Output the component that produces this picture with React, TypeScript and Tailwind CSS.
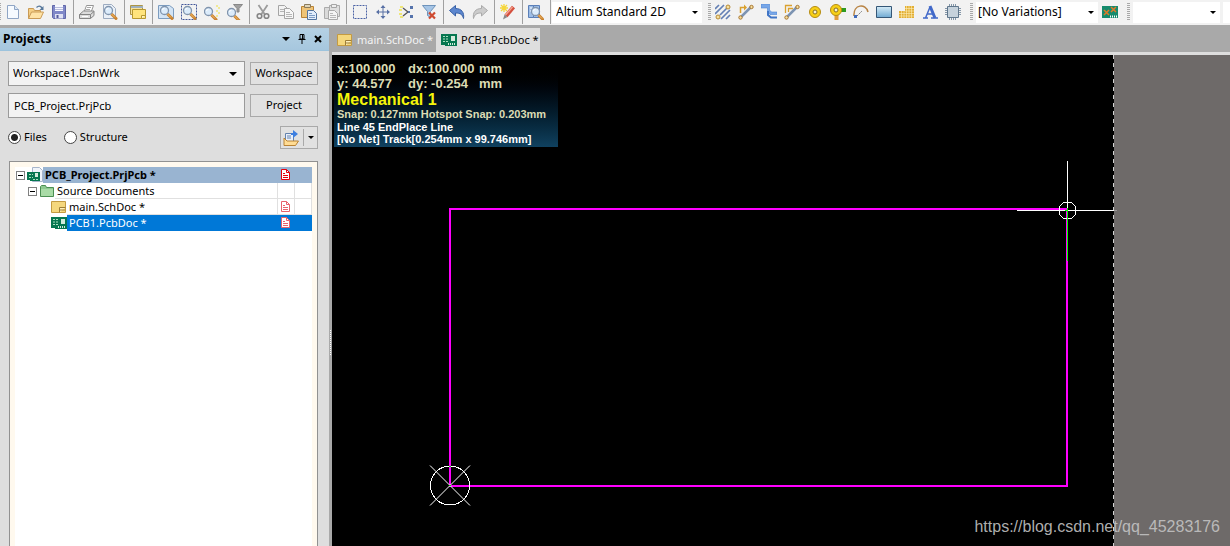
import {useState} from 'react'
import type {ReactNode} from 'react'

const lens = (
    <g>
        <path d="M10 10.5l4 4" stroke="#c9822f" strokeWidth="3" strokeLinecap="round"/>
        <path d="M9.5 10l3.5 3.5" stroke="#f3bd6c" strokeWidth="1"/>
        <circle cx="6.5" cy="6.5" r="4" fill="#dcecfb" stroke="#8094ad" strokeWidth="1.3"/>
        <path d="M4.5 6a2.2 2.2 0 0 1 2-1.8" stroke="#fff" fill="none"/>
    </g>
)

const page = 'M2.5 1.5h7l4 4v9h-11z'

const icons: Record<string, ReactNode> = {
    new: <><path d={page} fill="#f6faff" stroke="#8fa5c5"/><path d="M9.5 1.5v4h4" fill="#dbe7f5" stroke="#8fa5c5"/></>,
    open: <>
        <path d="M.5 14.5v-10h5l1 2h6v3" fill="#f5cf85" stroke="#c99a55"/>
        <path d="M.5 14.5l3-6.5h12l-3 6.5z" fill="#ffe3a6" stroke="#c99a55"/>
        <path d="M8.5 3.5q3-3 5.5.5" fill="none" stroke="#56779b" strokeWidth="1.3"/>
        <path d="M15.5 2v4h-4z" fill="#56779b"/>
    </>,
    save: <>
        <path d="M1.5 1.5h13v13h-12l-1-1z" fill="#8088c8" stroke="#6167a9"/>
        <path d="M4 1h8v6H4z" fill="#f7f8ff"/>
        <path d="M4 3.5h8M4 5.500h8" stroke="#b9bddc"/>
        <path d="M4 10h8v4.500H4z" fill="#dfe1f3"/>
        <path d="M5.500 11h2v3h-2z" fill="#545a9c"/>
    </>,
    print: <>
        <path d="M5.500 7l2-5.500h7L12.500 7" fill="#fff" stroke="#959595"/>
        <path d="M8 3.500h4M7 5.500h4" stroke="#aaa"/>
        <path d="M.5 10.500l4-3.500h10.500v4.500l-3.500 3H.5z" fill="#dcdcdc" stroke="#858585"/>
        <path d="M.5 10.500h11l3.500-3M11.500 10.500v4" fill="none" stroke="#858585"/>
        <path d="M3 12.500h6" stroke="#fff"/>
    </>,
    preview: <><path d="M1.500.5h8l4 4v10h-12z" fill="#eaf0f7" stroke="#9cabc0"/>{lens}</>,
    windows: <>
        <path d="M.5 1.500h12v9H.5z" fill="#f7e29c" stroke="#ac9545"/>
        <path d="M1 3h12" stroke="#9fb0bd" strokeWidth="2"/>
        <path d="M2.500 5.500h13v9h-13z" fill="#ffe47c" stroke="#b79831"/>
        <path d="M11.500 14.500v-3h4" fill="#fff5c6" stroke="#b79831"/>
    </>,
    fit: <><path d="M.5 1.500h11l4 3v10H.5z" fill="#d3e4f5" stroke="#7c9cbf"/>{lens}</>,
    area: <><path d="M.5.5h15v15H.5z" fill="none" stroke="#44589b" strokeDasharray="2 1"/>{lens}</>,
    selected: <>
        <g transform="translate(-2 1)">{lens}</g>
        <path d="M12 2h2M14 4h2M12 7h2M14 9h2M12 12h2" stroke="#efe678" strokeWidth="1.500"/>
    </>,
    filtered: <>
        <g transform="translate(-2 2)">{lens}</g>
        <path d="M6.500.5h9l-3.500 4V8h-2V4.500z" fill="#a0a0a0" stroke="#888"/>
    </>,
    cut: <>
        <path d="M3.500 1l6 9M12.500 1l-6 9" stroke="#9b9b9b" strokeWidth="1.800"/>
        <circle cx="4.500" cy="12" r="2.300" fill="none" stroke="#858585" strokeWidth="1.600"/>
        <circle cx="11.500" cy="12" r="2.300" fill="none" stroke="#858585" strokeWidth="1.600"/>
    </>,
    copy: <>
        <path d="M.5 1.500h6l3 3v7h-9z" fill="#f3f3f3" stroke="#a5a5a5"/>
        <path d="M6.500 4.500h5l4 4v6h-9z" fill="#f7f7f7" stroke="#a5a5a5"/>
        <path d="M2 5.500h4M2 7.500h4M8 8.500h4M8 10.500h6M8 12.500h6" stroke="#b5b5b5"/>
    </>,
    paste: <>
        <path d="M.5 2.500h12v11H.5z" fill="#efc477" stroke="#b98335"/>
        <path d="M3.500.5h6v3h-6z" fill="#e0d5b8" stroke="#8b7b5b"/>
        <path d="M6.500 6.500h6l3 3v6h-9z" fill="#e2edfb" stroke="#52749f"/>
        <path d="M8 9.500h3M8 11.500h6M8 13.500h6" stroke="#7d9cc4"/>
    </>,
    pasteSpecial: <>
        <path d="M.5 3.500h11v11H.5z" fill="#dadada" stroke="#ababab"/>
        <path d="M5.500 1.500h10v11h-10z" fill="#dfdfdf" stroke="#ababab"/>
        <path d="M7.500.5h5v3h-5z" fill="#eee" stroke="#a5a5a5"/>
        <path d="M4.500 6.500h6l3 3v6h-9z" fill="#f4f4f4" stroke="#a9a9a9"/>
        <path d="M6 9.500h3M6 11.500h6M6 13.500h6" stroke="#b8b8b8"/>
    </>,
    marquee: <path d="M1.500 1.500h13v13h-13z" fill="none" stroke="#4b62a5" strokeDasharray="2 1"/>,
    move: <>
        <path d="M8 2v12M2 8h12" stroke="#5870a4"/>
        <path d="M8 1L5.500 4h5zM8 15l-2.500-3h5zM1 8l3-2.500v5zM15 8l-3-2.500v5z" fill="#5870a4"/>
    </>,
    deselect: <>
        <path d="M2 3h3M1 6h3M1 10h3M2 13h3" stroke="#efe678" strokeWidth="2"/>
        <path d="M5 4l5 4-5 4" fill="none" stroke="#555" strokeWidth="1.300"/>
        <path d="M12 2h3v3h-3zM12 11h3v3h-3zM10 7h2v2h-2z" fill="#5573ac"/>
    </>,
    clear: <>
        <path d="M1.500 1.500h13l-5 6v6l-3-2v-4z" fill="#a6c5e6" stroke="#6e93bb"/>
        <path d="M8 8.500l6 6M14 8.500l-6 6" stroke="#cf4a30" strokeWidth="2.200"/>
    </>,
    undo: <path d="M.5 6.500l6-5v3c6 0 9 4 8 10-1-4-3-5.500-8-5.500v3z" fill="#5d87cf" stroke="#3861a6"/>,
    redo: <path d="M15.500 6.500l-6-5v3c-6 0-9 4-8 10 1-4 3-5.500 8-5.500v3z" fill="#ccc" stroke="#aaa"/>,
    wand: <>
        <path d="M6 12L13.500 3" stroke="#d4503f" strokeWidth="4"/>
        <path d="M5.500 11l7-8" stroke="#f5a590" strokeWidth="1.300"/>
        <path d="M3 15.500l1.500-5 3 2.500z" fill="#8a8a8a"/>
        <path d="M4 0v8M0 4h8M1 1l6 6M7 1L1 7" stroke="#f5d63b" strokeWidth="1.300"/>
    </>,
    browse: <>
        <path d="M.5 1.500h5v12h-5zM5.500 1.500h6v12h-6z" fill="#9dbde6" stroke="#5a7fb8"/>
        <path d="M2 4h2M2 7h2" stroke="#fff"/>
        <g transform="translate(1 1)">{lens}</g>
    </>,
    interactive: <>
        <path d="M0 5l4-4M0 10L9 1M5 11L14 2M6 15l9-9M11 15l4-4" stroke="#6480b5" strokeWidth="1.700"/>
        <circle cx="3" cy="13" r="2" fill="#f4dfa0" stroke="#b88a35"/>
        <circle cx="13" cy="3" r="2" fill="#f4dfa0" stroke="#b88a35"/>
    </>,
    route: <>
        <path d="M2.500 9V3.500H7" fill="none" stroke="#daa12e" strokeWidth="1.500"/>
        <path d="M6 .5L9 3.500 6 6.500z" fill="#daa12e"/>
        <path d="M3 13L13 3" stroke="#7d94b2" strokeWidth="2.500"/>
        <circle cx="2.500" cy="13.500" r="1.700" fill="#f4dfa0" stroke="#a8752f"/>
        <circle cx="13.500" cy="3" r="1.700" fill="#f4dfa0" stroke="#a8752f"/>
    </>,
    bus: <>
        <path d="M0 0h8.500v6l2 2H16v2.500H9L6.500 8V4H0z" fill="#78a7e8" stroke="#4e83d2" strokeWidth=".6"/>
        <path d="M7 7v4l3 2.500h6" fill="none" stroke="#3f74c5" strokeWidth="2"/>
    </>,
    multi: <>
        <path d="M1.500 9V1.500H8M4.500 8V4.500H9" fill="none" stroke="#daa12e" strokeWidth="1.300"/>
        <path d="M3 13L13 3" stroke="#7d94b2" strokeWidth="2.500"/>
        <circle cx="2.500" cy="13.500" r="1.700" fill="#f4dfa0" stroke="#a8752f"/>
        <circle cx="13.500" cy="3" r="1.700" fill="#f4dfa0" stroke="#a8752f"/>
    </>,
    pad: <>
        <circle cx="8" cy="8" r="5.500" fill="#f7cf17" stroke="#b58b12"/>
        <circle cx="8" cy="8" r="2" fill="#f8f3d5" stroke="#876f25"/>
    </>,
    via: <>
        <path d="M9 6h7" stroke="#2e9b20" strokeWidth="4"/>
        <path d="M6.500 9v7" stroke="#e39d3a" strokeWidth="4"/>
        <circle cx="6" cy="6" r="5.500" fill="#f7cf17" stroke="#b58b12"/>
        <circle cx="6" cy="6" r="2" fill="#f8f3d5" stroke="#876f25"/>
    </>,
    arc: <>
        <path d="M1 12C0 0 13-1 15 8" fill="none" stroke="#b88343" strokeWidth="1.500"/>
        <path d="M4 12l5-5" stroke="#777" strokeDasharray="2 1"/>
        <path d="M1 11h3v3H1z" fill="#416bbc"/>
    </>,
    rect: <>
        <defs>
            <linearGradient id="fill" x2="0" y2="1">
                <stop stopColor="#d6ecf7"/><stop offset="1" stopColor="#6fa9d2"/>
            </linearGradient>
        </defs>
        <path d="M.5 2.500h15v11H.5z" fill="url(#fill)" stroke="#355777"/>
    </>,
    polygon: <>
        <path d="M6 2h9v12H0V7h6z" fill="#e2ae34"/>
        <path d="M0 9.500h15M0 12h15M6 4.500h9M6 7h9M2.500 7v7M5 7v7M7.500 2v12M10 2v12M12.500 2v12" stroke="#fff0ba" strokeWidth=".6"/>
    </>,
    text: <>
        <path d="M8 2l5 12" stroke="#4269c9" strokeWidth="3"/>
        <path d="M1 14h5M9 14h7M3.500 14L8 3M5 10h6" fill="none" stroke="#4269c9" strokeWidth="1.500"/>
    </>,
    component: <>
        <path d="M4.500 0v16M6.500 0v16M8.500 0v16M10.500 0v16M0 4.500h16M0 6.500h16M0 8.500h16M0 10.500h16" stroke="#8496a8"/>
        <path d="M2.500 2.500h11v11h-11z" fill="#c5d1db" stroke="#60778c"/>
    </>,
    variant: <>
        <path d="M0 2h16v12H0z" fill="#168b6d"/>
        <path d="M2 6l5 5M7 6l-5 5M9 3l5 5M14 3L9 8" stroke="#e17a27" strokeWidth="1.500"/>
        <path d="M8 12.500h7" stroke="#fff" strokeWidth="2" strokeDasharray="1 1"/>
    </>,
    sch: <>
        <path d="M.5 2.500h14v11H.5z" fill="#f5d77d" stroke="#c49b42"/>
        <path d="M8.500 13.500v-5h6" fill="#fff0bd" stroke="#9d7d36"/>
        <path d="M9 11h5" stroke="#9d7d36"/>
    </>,
    pcb: <>
        <path d="M0 2h16v12H4v-1H0z" fill="#067650"/>
        <path d="M2 4.500h2M5 4.500h2M2 7h2M5 7h2M2 9.500h2M5 9.500h2" stroke="#a9e0bf"/>
        <path d="M10 4h4v5h-4z" fill="#d3eadb"/>
        <path d="M7 12h8" stroke="#d3eadb" strokeWidth="2" strokeDasharray="1 1"/>
    </>,
    project: <>
        <path d="M5.500.5h7l3 3v11h-10z" fill="#f0f4fa" stroke="#a7b5ca"/>
        <path d="M0 5h13v9H3v-1H0z" fill="#067650"/>
        <path d="M2 7.500h4M2 10.500h4M6 12.500h6" stroke="#a9e0bf" strokeDasharray="2 1"/>
        <path d="M8 6h3v4H8z" fill="#d3eadb"/>
    </>,
    folder: <>
        <path d="M1.500 13.500v-10l1-1h4l1 2h7v9z" fill="#8fc98f" stroke="#4c8f52"/>
        <path d="M2 6h12v7H2z" fill="#a9dba6"/>
    </>,
    modified: <>
        <path d="M3.500 2.500h5l3 3v7h-8z" fill="#fff" stroke="currentColor"/>
        <path d="M8.500 2.500v3h3M5 6.500h2M5 8.500h5M5 10.500h5" fill="none" stroke="currentColor"/>
    </>,
    options: <>
        <path d="M2.500 3.500h8v9h-8z" fill="#e8f0fb" stroke="#6482ad"/>
        <path d="M4 6h4M4 8h4" stroke="#6482ad"/>
        <path d="M8 3h2V0l5 4-5 4V5H8z" fill="#3d7fe0"/>
        <path d="M1 15.500V8l3 3h11.500l-3 4.500z" fill="#ffdc94" stroke="#b98335"/>
    </>,
}

function Icon({name, className = 'size-4'}: { name: string; className?: string }) {
    return <svg viewBox="0 0 16 16" className={`${className} shrink-0`} aria-hidden="true">{icons[name]}</svg>
}

function Tool({name}: { name: string }) {
    return (
        <button aria-label={name} className="flex h-6 w-[23px] shrink-0 items-center justify-center hover:bg-sky-100">
            <Icon name={name}/>
        </button>
    )
}

function Separator() {
    return <span className="mr-px ml-[3px] h-6 w-px shrink-0 bg-[#a0a0a0]"/>
}

function Grip() {
    return <span className="h-[18px] w-[3px] shrink-0 bg-[repeating-linear-gradient(#a8a8a8_0_1px,transparent_1px_2px)]"/>
}

function Arrow({className = ''}: { className?: string }) {
    return (
        <svg viewBox="0 0 8 4" className={`pointer-events-none shrink-0 ${className}`} aria-hidden="true">
            <path d="M0 0h8L4 4z"/>
        </svg>
    )
}

function Combo({label, value, className, arrow = 'right-1 h-[3px] w-1.5'}: {
    label: string;
    value: string;
    className: string;
    arrow?: string
}) {
    return (
        <div className={`relative flex shrink-0 items-center ${className}`}>
            <select aria-label={label} className="h-full w-full appearance-none bg-transparent outline-none">
                <option>{value}</option>
            </select>
            <Arrow className={`absolute ${arrow}`}/>
        </div>
    )
}

const toolGroups = [
    ['new', 'open', 'save'],
    ['print', 'preview'],
    ['windows'],
    ['fit', 'area', 'selected', 'filtered'],
    ['cut', 'copy', 'paste', 'pasteSpecial'],
    ['marquee', 'move', 'deselect', 'clear'],
    ['undo', 'redo'],
    ['wand'],
    ['browse'],
]

const placeTools = ['interactive', 'route', 'bus', 'multi', 'pad', 'via', 'arc', 'rect', 'polygon', 'text', 'component']

function Toolbar() {
    return (
        <div className="flex h-[25px] shrink-0 items-center overflow-hidden bg-[#f2f2f2] pb-px text-[12px]">
            <span className="h-[18px] w-px shrink-0 bg-[repeating-linear-gradient(#a8a8a8_0_1px,transparent_1px_2px)]"/>
            {toolGroups.map((group, i) => (
                <div key={i} className="flex shrink-0 items-center">
                    {group.map(name => <Tool key={name} name={name}/>)}
                    <Separator/>
                </div>
            ))}
            <Combo label="View configuration" value="Altium Standard 2D" className="mr-1.5 h-[21px] w-[150px] bg-white pl-1"/>
            <Grip/>
            {placeTools.map(name => <Tool key={name} name={name}/>)}
            <span className="w-1.5 shrink-0"/>
            <Grip/>
            <Combo label="Variant" value="[No Variations]" className="ml-[3px] h-[21px] w-[122px] bg-white pl-0.5"/>
            <Tool name="variant"/>
            <span className="w-1.5 shrink-0"/>
            <Grip/>
            <Combo label="Filter" value="" className="mr-[3px] ml-[3px] h-[21px] w-[87px] bg-white"/>
            <span className="h-[21px] flex-1 bg-white"/>
        </div>
    )
}

const docs = [
    {name: 'PCB_Project.PrjPcb *', icon: 'project', indent: 'pl-px', expandable: true, modified: true},
    {name: 'Source Documents', icon: 'folder', indent: 'pl-[13px]', expandable: true, modified: false},
    {name: 'main.SchDoc *', icon: 'sch', indent: 'pl-[36px]', expandable: false, modified: true},
    {name: 'PCB1.PcbDoc *', icon: 'pcb', indent: 'pl-[36px]', expandable: false, modified: true},
]

function DocTree({selected, onSelect}: { selected: string; onSelect: (name: string) => void }) {
    return (
        <div role="tree" className="ml-px flex-1 border border-b-0 border-[#919191] bg-[#fff9ee] px-[5px] pt-[5px]">
            <div className="h-full bg-white">
                {docs.map((d, i) => {
                    const isSelected = d.name === selected
                    let tone = 'border-[#e0e0e0]'
                    if (i === 0) tone = 'border-[#99b4d1] bg-[#99b4d1] font-bold'
                    if (isSelected) tone = 'border-[#0078d7] bg-[#0078d7] text-white'
                    return (
                        <div key={d.name} role="treeitem" aria-selected={isSelected} onClick={() => onSelect(d.name)}
                             className={`flex h-4 items-center ${d.indent}`}>
                            {d.expandable && (
                                <span className="mr-0.5 flex size-[9px] shrink-0 items-center justify-center border border-[#808080] bg-white">
                                    <span className="h-px w-[5px] bg-black"/>
                                </span>
                            )}
                            <Icon name={d.icon}/>
                            <div className={`flex h-full flex-1 border-b ${tone}`}>
                                <span className="flex-1 pl-0.5 leading-[15px]">{d.name}</span>
                                <span className={`flex w-[17px] items-center justify-center border-l border-inherit ${i === 0 ? 'text-red-600' : 'text-[#e8616b]'}`}>
                                    {d.modified && <Icon name="modified"/>}
                                </span>
                                <span className="w-[18px] border-x border-inherit"/>
                            </div>
                        </div>
                    )
                })}
            </div>
        </div>
    )
}

function ProjectsPanel({selected, onSelect}: { selected: string; onSelect: (name: string) => void }) {
    const [view, setView] = useState('Files')
    const button = 'h-[23px] w-[68px] shrink-0 border border-[#a9a9a9] bg-[#e1e1e1]'

    return (
        <aside className="flex w-[329px] shrink-0 flex-col bg-[#dedede]">
            <header className="flex h-[23px] items-center border-b border-[#9cc3dd] bg-linear-to-b from-[#b5d1e4] to-[#a6c7de] pr-[3px] pl-[3px]">
                <h1 className="flex-1 text-[12px] font-bold">Projects</h1>
                <button aria-label="Panel menu" className="flex w-4 justify-center"><Arrow className="h-1 w-2"/></button>
                <button aria-label="Pin panel" className="flex w-4 justify-center">
                    <svg viewBox="0 0 8 10" className="h-2.5 w-2"><path d="M2 .5h4V5H2zM4.500 1v4M.5 5.500h7M4 6v4" fill="none" stroke="#000"/></svg>
                </button>
                <button aria-label="Close panel" className="flex w-4 justify-center">
                    <svg viewBox="0 0 8 8" className="size-2"><path d="M1 1l6 6M7 1L1 7" stroke="#000" strokeWidth="2"/></svg>
                </button>
            </header>
            <div className="flex flex-1 flex-col pt-[10px] pr-[11px] pl-2">
                <div className="mb-[7px] flex items-center gap-[5px]">
                    <Combo label="Workspace name" value="Workspace1.DsnWrk" arrow="right-[7px] h-1 w-2"
                           className="h-[25px] min-w-0 flex-1 border border-[#9a9a9a] bg-[#f3f3f3] pl-1"/>
                    <button className={button}>Workspace</button>
                </div>
                <div className="mb-2 flex items-center gap-[5px]">
                    <input aria-label="Project name" defaultValue="PCB_Project.PrjPcb"
                           className="h-[25px] min-w-0 flex-1 border border-[#9a9a9a] bg-[#f3f3f3] px-[5px] outline-none"/>
                    <button className={button}>Project</button>
                </div>
                <div className="mb-3 flex h-[23px] items-center">
                    {['Files', 'Structure'].map(v => (
                        <label key={v} className="mr-[17px] flex items-center gap-[3px]">
                            <input type="radio" name="view" checked={view === v} onChange={() => setView(v)}
                                   className="size-[13px] appearance-none rounded-full border border-[#444] bg-white checked:bg-[radial-gradient(circle,#222_0_3px,white_4px)]"/>
                            {v}
                        </label>
                    ))}
                    <button aria-label="Panel options" className="ml-auto flex h-[23px] w-[38px] items-center border border-[#a9a9a9] bg-[#e1e1e1] pl-0.5">
                        <Icon name="options"/>
                        <span className="mr-1 ml-1 h-[17px] w-px bg-[#a9a9a9]"/>
                        <Arrow className="h-[3px] w-1.5"/>
                    </button>
                </div>
                <DocTree selected={selected} onSelect={onSelect}/>
            </div>
        </aside>
    )
}

function HeadsUp() {
    return (
        <div className="absolute top-[5px] left-0.5 w-[224px] bg-linear-to-b from-black to-[#10415f] pt-px pb-0.5 pl-[3px] font-['Liberation_Sans',Arial,sans-serif] font-bold whitespace-nowrap text-white">
            <div className="grid grid-cols-[71px_71px_auto] text-[13px] leading-[15px] text-[#dcdcb4]">
                <span>x:100.000</span><span>dx:100.000</span><span>mm</span>
                <span>y: 44.577</span><span>dy: -0.254</span><span>mm</span>
            </div>
            <p className="text-[16px] leading-[17px] text-[#f5f50a]">Mechanical 1</p>
            <p className="text-[11px] leading-[13px] text-[#dcdcb4]">Snap: 0.127mm Hotspot Snap: 0.203mm</p>
            <p className="text-[11px] leading-[12px]">Line 45 EndPlace Line</p>
            <p className="text-[11px] leading-[12px]">[No Net] Track[0.254mm x 99.746mm]</p>
        </div>
    )
}

function Board() {
    return (
        <div className="relative flex flex-1 overflow-hidden bg-black">
            <div className="flex-1"/>
            <div className="w-px bg-[repeating-linear-gradient(#d0d0d0_0_4px,black_4px_8px)]"/>
            <div className="w-[116px] bg-[#6e6a69]"/>
            <svg className="absolute inset-0 h-full w-full" shapeRendering="crispEdges" fill="none" aria-label="Board outline">
                <rect x="118" y="154" width="617" height="277" stroke="#f0f" strokeWidth="2"/>
                <g stroke="#fff">
                    <circle cx="118" cy="430.5" r="19.5"/>
                    <path d="M98 410.500l40 40M98 450.500l40-40" shapeRendering="auto"/>
                    <path d="M735.5 106v50M685 155.500h97"/>
                    <path d="M731.5 147.500h8l4 4v8l-4 4h-8l-4-4v-8z"/>
                </g>
                <path d="M782 155.500h3" stroke="#9a9797"/>
                <path d="M735.5 153v53M117 430.500h2M117 411.500h2M733 155.500h3" stroke="#0f0"/>
            </svg>
            <HeadsUp/>
            <span className="absolute right-[10px] bottom-2 font-['Liberation_Sans',Arial,sans-serif] text-[16px] leading-[22px] text-[#c4c4c4]/90">
                https://blog.csdn.net/qq_45283176
            </span>
        </div>
    )
}

export default function App() {
    const [active, setActive] = useState('PCB1.PcbDoc *')

    return (
        <div className="flex h-screen flex-col overflow-hidden bg-[#a9a9a9] font-['Noto_Sans','Open_Sans',sans-serif] text-[11px] text-black">
            <Toolbar/>
            <div className="flex min-h-0 flex-1 pt-[3px]">
                <ProjectsPanel selected={active} onSelect={setActive}/>
                <div className="flex w-[3px] shrink-0 items-center justify-center">
                    <span className="mb-[-112px] h-[26px] w-px bg-[repeating-linear-gradient(white_0_1px,transparent_1px_2px)]"/>
                </div>
                <main className="flex min-w-0 flex-1 flex-col">
                    <div role="tablist" className="flex h-6 shrink-0">
                        {docs.slice(2).map(d => (
                            <button key={d.name} role="tab" aria-selected={active === d.name} onClick={() => setActive(d.name)}
                                    className={`flex h-full w-[104px] items-center gap-1 pl-[5px] whitespace-nowrap ${active === d.name ? 'bg-[#dedede]' : 'text-[#f4f4f4]'}`}>
                                <Icon name={d.icon}/>
                                {d.name}
                            </button>
                        ))}
                    </div>
                    <div className="h-[3px] shrink-0 bg-[#dedede]"/>
                    <Board/>
                </main>
            </div>
        </div>
    )
}
